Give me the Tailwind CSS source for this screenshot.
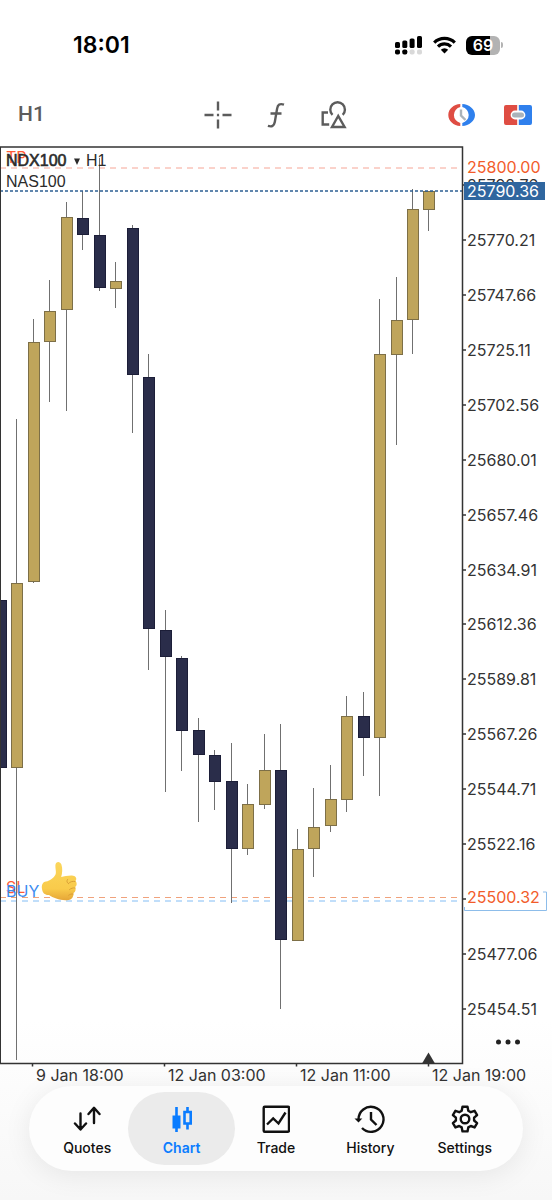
<!DOCTYPE html>
<html lang="en">
<head>
<meta charset="utf-8">
<meta name="viewport" content="width=device-width, initial-scale=1">
<title>NDX100 chart</title>
<script src="https://cdn.jsdelivr.net/npm/@tailwindcss/browser@4"></script>
</head>
<body class="min-h-screen bg-linear-to-b from-white from-85% to-[#f7f7f7] font-['Inter',sans-serif] text-[#111]">
<div class="flex min-h-screen flex-col">

  <!-- Status bar -->
  <header class="flex h-[90px] items-center justify-between pr-[49px] pl-[73px]">
    <time class="text-[23px] font-semibold text-black">18:01</time>
    <div class="flex items-center gap-[10px]">
      <svg class="h-[20px] w-[28px]" viewBox="0 0 28 20" aria-label="Signal">
        <g fill="#000"><rect x="0" y="7" width="5" height="6" rx="1.6"/><rect x="7.300" y="5.500" width="5" height="7.500" rx="1.600"/><rect x="14.600" y="3.500" width="5" height="9.500" rx="1.600"/><rect x="22" y="1" width="5" height="12" rx="1.600"/><rect x="0" y="14.500" width="5" height="5" rx="1.800"/><rect x="7.300" y="14.500" width="5" height="5" rx="1.800"/></g>
        <g fill="#d9d9d9"><rect x="14.600" y="14.500" width="5" height="5" rx="1.800"/><rect x="22" y="14.500" width="5" height="5" rx="1.800"/></g>
      </svg>
      <svg class="h-[18px] w-[23px]" viewBox="0 0 23 18" fill="none" stroke="#000" stroke-width="3.200" aria-label="Wi-Fi">
        <path d="M1.200 6.600a14.800 14.800 0 0 1 20.600 0M5 10.600a9.300 9.300 0 0 1 13 0"/>
        <path d="M11.500 17.600l-3.700-3.800a5.300 5.300 0 0 1 7.400 0z" fill="#000" stroke="none"/>
      </svg>
      <div class="flex items-center gap-px">
        <div class="flex h-[19px] w-[34px] items-center justify-center rounded-[6px] bg-linear-to-r from-black from-72% to-[#b3b3b3] to-72% text-[16px] font-semibold text-white">69</div>
        <div class="h-[6px] w-[2px] rounded-r-full bg-[#b3b3b3]"></div>
      </div>
    </div>
  </header>

  <!-- Chart toolbar -->
  <div class="mb-[6px] flex h-[50px] items-center justify-between pr-[20px] pl-[18px]">
    <button class="w-[152px] text-left font-['Roboto',sans-serif] text-[21px] font-medium text-[#5c5c5c]">H1</button>
    <div class="flex items-center gap-[30px]">
      <button aria-label="Crosshair"><svg class="size-[28px]" viewBox="0 0 28 28" stroke="#5c5c5c" stroke-width="2.400"><path d="M14 .5v9M14 18.500v9M.5 14h9M18.500 14h9M12.900 14h2.200"/></svg></button>
      <button aria-label="Indicators"><svg class="size-[28px]" viewBox="0 0 28 28" fill="none" stroke="#5c5c5c" stroke-width="2.400"><path d="M22 3.600c-4.200-1.400-6.200 0-6.900 4L12.800 21c-.8 4.200-2.900 5-6.900 3.900M8.500 12.500h11"/></svg></button>
      <button aria-label="Objects"><svg class="size-[28px]" viewBox="0 0 28 28" fill="none" stroke="#5c5c5c" stroke-width="2.400"><path d="M8 11.500H2.700v12h6.500M12.500 13.800a7.300 7.300 0 1 1 10.200 0M18.200 15l-6.200 11h12.600z"/></svg></button>
    </div>
    <div class="flex w-[150px] items-center justify-end gap-[28px]">
      <button aria-label="Trading hours"><svg class="size-[28px]" viewBox="0 0 28 28">
        <path d="M12.300 3C5.500 3.500.3 8 .3 14s5.200 10.500 12 11v-3a8.200 8.200 0 0 1 0-16z" fill="#df4d43"/><path d="M14.300 3c6.800.5 12.700 5 12.700 11s-5.900 10.500-12.700 11v-3a8.200 8.200 0 0 0 0-16z" fill="#2f80ed"/>
        <path d="M13 8.500v6l4.500 4.500" fill="none" stroke="#aab3ba" stroke-width="2.400"/>
      </svg></button>
      <button aria-label="One click trading"><svg class="size-[28px]" viewBox="0 0 28 28">
        <path d="M2 4h11.200v5.600H11a4.400 4.400 0 0 0 0 8.800h2.200V24H2a2 2 0 0 1-2-2V6a2 2 0 0 1 2-2z" fill="#df4d43"/>
        <path d="M26 4H14.800v5.600H17a4.400 4.400 0 0 1 0 8.800h-2.200V24H26a2 2 0 0 0 2-2V6a2 2 0 0 0-2-2z" fill="#2f80ed"/>
        <rect x="8" y="11.500" width="12" height="5" rx="2.500" fill="#aab3ba"/>
      </svg></button>
    </div>
  </div>

  <!-- Price chart -->
  <main>
    <svg id="chart" class="block h-auto w-full" viewBox="0 146 552 940" role="img" aria-label="NDX100 hourly candles">
      <g fill="none" stroke-width="1">
        <path d="M0 168H462" stroke="#f6a596" stroke-dasharray="6 5"/>
        <path d="M0 897.500H462" stroke="#f0a27c" stroke-dasharray="6 5"/>
        <path d="M0 901H462" stroke="#82bdf5" stroke-dasharray="6 5"/>
      </g>
      <g class="text-[16px]"><text x="6" y="163" fill="#ff5a36">TP</text><text x="6" y="893" fill="#ff5a36">SL</text><text x="6" y="897" fill="#3b8cf0">BUY</text></g>
      <g id="candles"></g>
      <path d="M0 191H462" stroke="#2d5f93" stroke-width="1.500" stroke-dasharray="3 2"/>
      <g class="font-['Liberation_Sans',sans-serif] text-[16px]" fill="#2b2b2b">
        <text x="6" y="166" stroke="#2b2b2b" stroke-width=".6">NDX100</text><path d="M74 158.500h6l-3 6.500z"/><text x="86" y="166">H1</text><text x="6" y="187">NAS100</text>
      </g>
      <g stroke="#333" fill="none"><path d="M.5 147V1063.500" stroke-width="1"/><path d="M0 147H462.500V1063.500H0" stroke-width="1.500"/></g>
      <path d="M428.500 1052.500l6.500 11h-13z" fill="#333"/>
      <path d="M32.500 1063v3.500M164.500 1063v3.500M296.500 1063v3.500M428.500 1063v3.500" stroke="#333" stroke-width="1.500"/>
      <g id="prices" class="text-[16px]" fill="#333"></g>
      <rect x="464" y="182" width="81" height="18" fill="#2f669f"/>
      <g class="text-[16px]">
        <text x="467" y="173" fill="#f25c2a">25800.00</text>
        <text x="467" y="197" fill="#fff">25790.36</text>
        <text x="467" y="903" fill="#f25c2a">25500.32</text>
      </g>
      <path d="M543 892H546.500V910.500H464.500V907" fill="none" stroke="#8dbdea"/>
      <g class="text-[16px]" fill="#333"><text x="36" y="1081">9 Jan 18:00</text><text x="168" y="1081">12 Jan 03:00</text><text x="300" y="1081">12 Jan 11:00</text><text x="432" y="1081">12 Jan 19:00</text></g>
      <g fill="#222"><circle cx="498.500" cy="1042" r="2.500"/><circle cx="508" cy="1042" r="2.500"/><circle cx="517.500" cy="1042" r="2.500"/></g>
      <!-- Thumbs-up sticker -->
      <defs><linearGradient id="skin" x1="0" y1="0" x2="0" y2="1"><stop offset="0" stop-color="#fbd65c"/><stop offset=".7" stop-color="#f9cb4b"/><stop offset="1" stop-color="#e6a637"/></linearGradient></defs>
      <path d="M42 889c-.6-4 .6-7 4-7.500 4-.6 8.500-4 9.700-7.500.7-2.500-.6-6-.3-9 .5-4 4.800-4 6-.5 1.300 4 1 8.500-.2 12.500 3-.5 8-1.800 11.800-1.300 3.500.5 4 3.600 2.500 5.300 1.800 2 1.500 4.500-.3 6 1 2.500.3 5-1.700 6 .3 3.500-1.500 6.500-5 7-7.500 1-15-2-19.500-5-4 .3-6.500-2-7-6z" fill="url(#skin)"/>
      <path d="M75 881.500c-2.500-.5-5 .2-6.500 2M75 888c-2-.4-4 .3-5.500 1.600M73 894c-1.500-.2-3 .2-4.300 1.200M67.500 879.500c-1 1.400-.7 3.200.8 4" fill="none" stroke="#d29531" stroke-width=".8" stroke-linecap="round"/>
    </svg>
  </main>

  <!-- Tab bar -->
  <nav class="mx-[29px] mb-[29px] grid h-[85px] grid-cols-5 rounded-full bg-[#fdfdfd] px-[11px] py-[6px] text-[14px] leading-[16px] font-medium shadow-[0_4px_28px_rgba(0,0,0,0.08)]">
    <button class="flex flex-col items-center justify-center gap-[7px] pt-[4px]">
      <svg class="size-[28px]" viewBox="0 0 28 28" fill="none" stroke="#111" stroke-width="2.400" stroke-linecap="round" stroke-linejoin="round"><path d="M7.500 8.500V24M2 18.500L7.500 24.500 13 18.500M21 18V3M15.500 9L21 2.800 26.500 9"/></svg>
      <span>Quotes</span>
    </button>
    <button class="-mx-[6px] flex flex-col items-center justify-center gap-[7px] rounded-full bg-[#ebebeb] pt-[4px] font-semibold text-[#0a7cff]" aria-current="page">
      <svg class="size-[28px]" viewBox="0 0 28 28" fill="none" stroke="#0a7cff"><path d="M8.500 2v25M19.500 2v5M19.500 19v5.500" stroke-width="2.600"/><path d="M4.500 10.500h8v13h-8z" fill="#0a7cff" stroke="none"/><path d="M16.500 7h6.200v11.500h-6.200z" stroke-width="2.600"/></svg>
      <span>Chart</span>
    </button>
    <button class="flex flex-col items-center justify-center gap-[7px] pt-[4px]">
      <svg class="size-[28px]" viewBox="0 0 28 28" fill="none" stroke="#111" stroke-width="2.400"><rect x="1.700" y="1.700" width="25.300" height="25" rx="1"/><path d="M5 19.500l6.200-6 5.300 5 7-11"/></svg>
      <span>Trade</span>
    </button>
    <button class="flex flex-col items-center justify-center gap-[7px] pt-[4px]">
      <svg class="size-[28px] overflow-visible" viewBox="0 0 28 28" fill="none" stroke="#111" stroke-width="2.400"><path d="M2.500 14.500A12.500 12.500 0 1 1 6 23M15 7v7.500l5.500 5.500"/><path d="M-1.500 13.500h7.800L2.500 17.500z" fill="#111" stroke="none"/></svg>
      <span>History</span>
    </button>
    <button class="flex flex-col items-center justify-center gap-[7px] pt-[4px]">
      <svg class="size-[28px]" viewBox="0 0 28 28" fill="none" stroke="#111" stroke-width="2.400" stroke-linejoin="round"><path d="M11.500 1.800h5l.8 4 2.500 1.400 3.800-1.400 2.500 4.300-3 2.600v2.800l3 2.600-2.500 4.300-3.800-1.400-2.500 1.400-.8 4h-5l-.8-4-2.500-1.400-3.800 1.400-2.500-4.300 3-2.600v-2.800l-3-2.600 2.500-4.300 3.800 1.400 2.500-1.400z"/><circle cx="14" cy="14" r="4.300"/></svg>
      <span>Settings</span>
    </button>
  </nav>
</div>

<script>
  // Candles: [centre x, body top, body bottom, high, low, rising]
  const candles = [
    [0, 600, 768, 600, 768, 0], [16.5, 583, 768, 419, 1060, 1], [33, 342, 582, 319, 583, 1],
    [49.5, 311, 342, 280, 402, 1], [66, 217, 310, 202, 411, 1], [82.5, 218, 235, 191, 250, 0],
    [99, 235, 288, 158, 291, 0], [115.5, 281, 289, 262, 308, 1], [132, 228, 375, 225, 433, 0],
    [148.5, 377, 629, 354, 670, 0], [165, 630, 657, 610, 792, 0], [181.5, 658, 731, 656, 771, 0],
    [198, 730, 755, 718, 822, 0], [214.5, 755, 782, 750, 810, 0], [231, 781, 849, 743, 903, 0],
    [247.5, 804, 849, 784, 855, 1], [264, 770, 805, 734, 809, 1], [280.5, 770, 940, 724, 1009, 0],
    [297, 849, 941, 829, 941, 1], [313.5, 827, 849, 788, 877, 1], [330, 799, 826, 765, 832, 1],
    [346.5, 716, 800, 696, 812, 1], [363, 716, 738, 692, 776, 0], [379.5, 354, 738, 299, 796, 1],
    [396, 320, 355, 277, 445, 1], [412.5, 209, 320, 189, 354, 1], [428.5, 191, 210, 191, 231, 1]
  ];
  document.getElementById('candles').innerHTML = candles.map(([x, open, close, high, low, up]) =>
    `<path d="M${Math.floor(x) + .5} ${high}V${low}" stroke="#707070" stroke-width="1"/>` +
    `<rect x="${Math.floor(x) - 5 + .5}" y="${open + .5}" width="11" height="${close - open - 1}" fill="${up ? '#bfa55b' : '#2a2d4a'}" stroke="${up ? '#7d6f47' : '#1c1e38'}" stroke-width="1"/>`
  ).join('');

  // Price scale; the mark at 25499.56 gives way to the stop-loss label
  const scaleTop = 185, scaleStep = 54.93;
  let marks = '';
  for (let i = 0; i < 16; i++) {
    const y = Math.round(scaleTop + i * scaleStep), price = (25792.76 - i * 22.55).toFixed(2);
    marks += `<path d="M463 ${y}h3" stroke="#333" stroke-width="1.500"/>`;
    if (i !== 13) marks += `<text x="467" y="${y + 6}">${price}</text>`;
  }
  document.getElementById('prices').innerHTML = marks;
</script>
</body>
</html>
